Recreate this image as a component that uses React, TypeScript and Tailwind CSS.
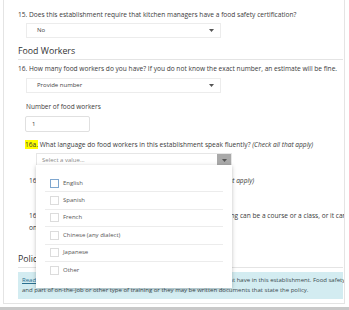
import React from 'react'

// Inspection questionnaire: food workers section with an open multi-select.

const LANGUAGES = ['English', 'Spanish', 'French', 'Chinese (any dialect)', 'Japanese', 'Other']

function Caret() {
  return (
    <svg width="5" height="3" viewBox="0 0 5 3" className="shrink-0">
      <path d="M0 0h5L2.5 3z" fill="#555" />
    </svg>
  )
}

function SelectBox({ value }: { value: string }) {
  return (
    <div className="ml-[8px] flex h-[15px] w-[195px] items-center justify-between border border-[#ececec] pl-[10px] pr-[6px] text-[6px] text-[#444]">
      <span>{value}</span>
      <Caret />
    </div>
  )
}

function LanguageMenu() {
  return (
    <div className="absolute left-[36px] top-[165px] h-[123px] w-[196px] bg-white pt-[10px] shadow-[0_1px_4px_rgba(0,0,0,0.25)]">
      <div className="mx-[9px] flex flex-col">
        {LANGUAGES.map((lang, i) => (
          <div
            key={lang}
            className={`flex h-[17.4px] items-center gap-[4px] pl-[5px] ${i < LANGUAGES.length - 1 ? 'border-b border-[#ececec]' : ''}`}
          >
            <span
              className={`h-[9px] w-[9px] border ${i === 0 ? 'border-[#7fa7cf]' : 'border-[#dcdcdc]'}`}
            />
            <span className="text-[6px] text-[#555]">{lang}</span>
          </div>
        ))}
      </div>
    </div>
  )
}

export default function App() {
  return (
    <div
      className="relative h-[310px] w-[349px] overflow-hidden bg-white text-[#3a3a3a]"
      style={{ fontFamily: '"Open Sans", "Noto Sans", sans-serif' }}
    >
      <div className="ml-[3px] h-[304px] w-[342px] overflow-hidden border-b border-l border-r border-[#e4e4e4] pl-[14px] pr-px">
        <div className="pt-[10px] text-[6.6px] leading-[10px]">
          15. Does this establishment require that kitchen managers have a food safety certification?
        </div>
        <div className="mt-[3px]">
          <SelectBox value="No" />
        </div>

        <div className="mt-[7px] border-b border-[#e4e4e4] pb-[1px] text-[8.8px] leading-[13px] text-[#333]">
          Food Workers
        </div>

        <div className="mt-[4px] whitespace-nowrap text-[6.6px] leading-[10px]">
          16. How many food workers do you have? If you do not know the exact number, an estimate will be fine.
        </div>
        <div className="mt-[4px]">
          <SelectBox value="Provide number" />
        </div>

        <div className="ml-[8px] mt-[9px] text-[6.5px] leading-[10px]">Number of food workers</div>
        <div className="ml-[7px] mt-[4px] flex h-[16px] w-[65px] items-center rounded-[2px] border border-[#e0e0e0] pl-[6px] text-[6px]">
          1
        </div>

        <div className="ml-[7px] mt-[8px] whitespace-nowrap text-[6.6px] leading-[10px]">
          <span className="bg-[#ffff00]">16a.</span> What language do food workers in this establishment speak fluently?{' '}
          <i>(Check all that apply)</i>
        </div>
        <div className="ml-[18px] mt-[3px] flex h-[15px] w-[196px] items-center justify-between border border-[#e6e6e6] text-[6px] text-[#888]">
          <span className="pl-[5px]">Select a value...</span>
          <span className="flex h-[14px] w-[14px] items-center justify-center bg-[#a9a9a9]">
            <Caret />
          </span>
        </div>

        <div className="ml-[11px] mt-[8px] whitespace-nowrap text-[6.6px] leading-[10px]">
          16b. What languages can food workers read fluently? <i>(Check all that apply)</i>
        </div>

        <div className="ml-[11px] mt-[24px] whitespace-nowrap text-[6.6px] leading-[12px]">
          <div>16c. Have food workers had any safety training? Food safety training can be a course or a class, or it can</div>
          <div>on-the-job training.</div>
        </div>

        <div className="mt-[19px] border-b border-[#e4e4e4] pb-[1px] text-[8.8px] leading-[13px] text-[#333]">
          Policy
        </div>
        <div className="mt-[4px] h-[27px] whitespace-nowrap bg-[#d3ecf1] pl-[4px] pt-[3px] text-[6px] leading-[10px] text-[#3a4a4f]">
          <div>
            <span className="text-[#2a6f8f] underline">Read</span> more about the written food safety policies or any rules that you might have in this establishment. Food safety
          </div>
          <div>and part of on-the-job or other type of training or they may be written documents that state the policy.</div>
        </div>
      </div>
      <div className="mt-[3px] h-[3px] w-full bg-[#c9c9c9]" />

      <LanguageMenu />
    </div>
  )
}
